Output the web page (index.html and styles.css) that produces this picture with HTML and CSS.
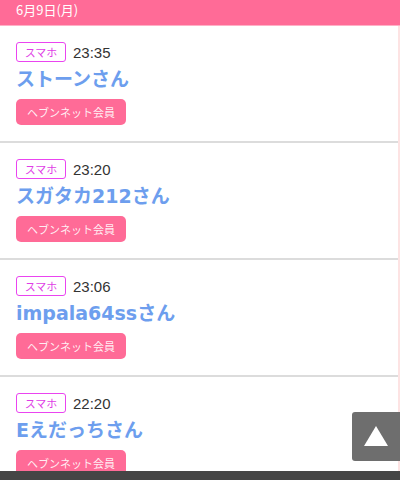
FILE: index.html
```html
<!DOCTYPE html>
<html lang="ja">
<head>
<meta charset="utf-8">
<title>会員一覧</title>
<link rel="stylesheet" href="styles.css">
</head>
<body>
<header class="day-head">6月9日(月)</header>
<ul class="list">
  <li class="item">
    <div class="meta"><span class="device">スマホ</span><span class="time">23:35</span></div>
    <div class="name">ストーンさん</div>
    <span class="member">ヘブンネット会員</span>
  </li>
  <li class="item">
    <div class="meta"><span class="device">スマホ</span><span class="time">23:20</span></div>
    <div class="name">スガタカ212さん</div>
    <span class="member">ヘブンネット会員</span>
  </li>
  <li class="item">
    <div class="meta"><span class="device">スマホ</span><span class="time">23:06</span></div>
    <div class="name">impala64ssさん</div>
    <span class="member">ヘブンネット会員</span>
  </li>
  <li class="item">
    <div class="meta"><span class="device">スマホ</span><span class="time">22:20</span></div>
    <div class="name">Eえだっちさん</div>
    <span class="member">ヘブンネット会員</span>
  </li>
</ul>
<a class="to-top" href="#" aria-label="ページトップへ"><span class="arrow"></span></a>
<div class="footer-bar"></div>
</body>
</html>
```
FILE: styles.css
```css
html, body {
  margin: 0;
  padding: 0;
  background: #fff;
}
body {
  font-family: "Noto Sans CJK JP", "Noto Sans", sans-serif;
  color: #333;
  height: 480px;
  overflow: hidden;
}
.day-head {
  height: 25px;
  line-height: 20px;
  padding: 0 16px;
  background: #ff6b97;
  border-bottom: 1px solid #ffb0c6;
  color: #fff;
  font-size: 13px;
}
.list {
  list-style: none;
  margin: 0;
  padding: 0;
  border-right: 2px solid #fde3e3;
}
.item {
  padding: 16px 16px;
  border-bottom: 2px solid #dcdcdc;
}
.meta {
  display: flex;
  align-items: center;
  height: 20px;
  gap: 7px;
}
.device {
  box-sizing: border-box;
  height: 20px;
  width: 50px;
  border: 1px solid #ea44f0;
  border-radius: 3px;
  color: #e03ce6;
  font-size: 11px;
  line-height: 18px;
  text-align: center;
}
.time {
  font-family: "Liberation Sans", "Noto Sans", sans-serif;
  font-size: 15px;
  color: #333;
}
.name {
  margin-top: 3px;
  height: 28px;
  line-height: 28px;
  font-family: "DejaVu Sans", "Noto Sans CJK JP", sans-serif;
  font-size: 19px;
  font-weight: bold;
  color: #6d9eee;
  white-space: nowrap;
}
.member {
  display: inline-block;
  margin-top: 6px;
  width: 110px;
  height: 26px;
  line-height: 26px;
  border-radius: 5px;
  background: #ff6b97;
  color: rgba(255, 255, 255, 0.9);
  font-size: 11px;
  text-align: center;
  vertical-align: top;
}
.to-top {
  position: fixed;
  right: 0;
  bottom: 19px;
  width: 48px;
  height: 49px;
  background: #6e6e6e;
  border-radius: 3px 0 0 3px;
  display: flex;
  align-items: center;
  justify-content: center;
}
.arrow {
  width: 0;
  height: 0;
  border-left: 12px solid transparent;
  border-right: 12px solid transparent;
  border-bottom: 20px solid #fff;
  margin-top: -2px;
}
.footer-bar {
  position: fixed;
  left: 0;
  right: 0;
  bottom: 0;
  height: 9px;
  background: #454545;
}
```
